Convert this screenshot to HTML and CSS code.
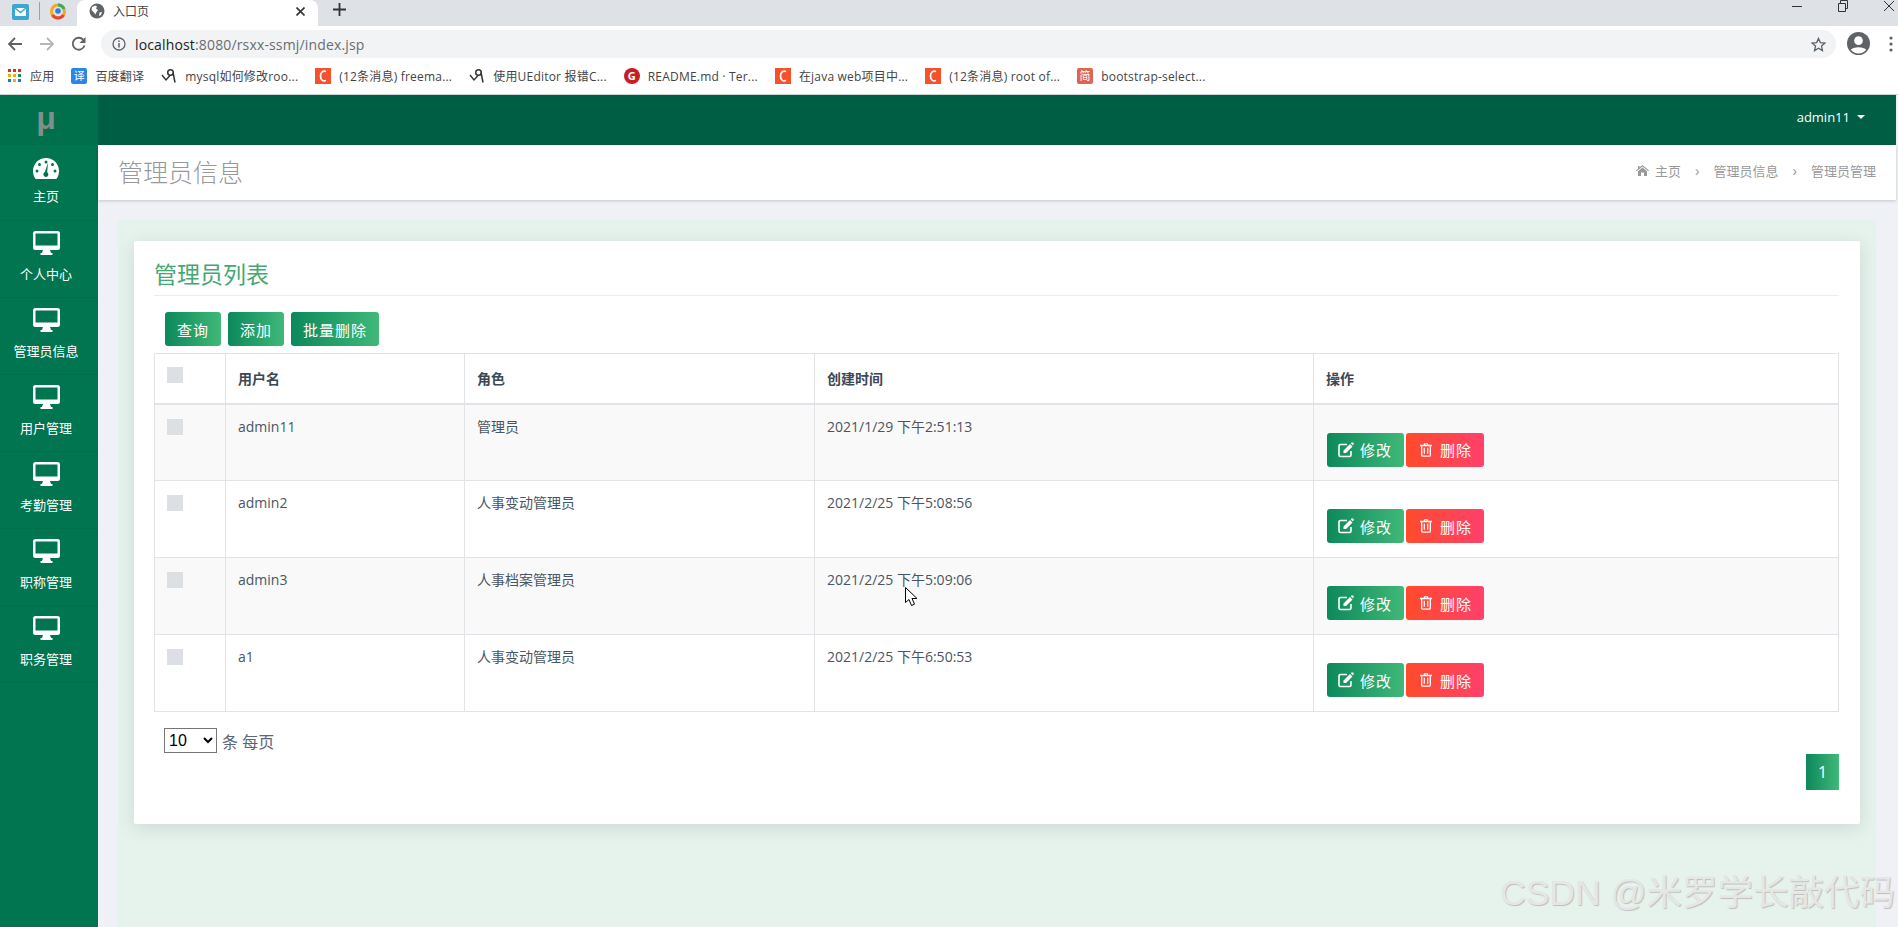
FILE: index.html
```html
<!DOCTYPE html>
<html lang="en">
<head>
    <meta charset="UTF-8">
    <title>入口页</title>
    <link rel="stylesheet" href="styles.css">
</head>
<body>
    <svg class="defs" width="0" height="0">
        <symbol id="desktop" viewBox="0 0 27 24">
            <path fill="#fff" fill-rule="evenodd" d="M2.5 0h22A2.5 2.5 0 0 1 27 2.500v14a2.500 2.500 0 0 1-2.500 2.500H17l1 3h1.500v2h-12v-2H9l1-3H2.500A2.500 2.500 0 0 1 0 16.500v-14A2.500 2.500 0 0 1 2.500 0zM2.500 2.500v12h22v-12z"/>
        </symbol>
        <symbol id="edit" viewBox="0 0 16 16">
            <path fill="none" stroke="#fff" stroke-width="1.600" d="M13 9v4a1.500 1.500 0 0 1-1.500 1.500h-9A1.500 1.500 0 0 1 1 13V4a1.500 1.500 0 0 1 1.500-1.500H9"/>
            <path fill="#fff" d="M5.500 8.500 12 2l2.500 2.500-6.500 6.500H5.500zM12.800 1.200l.7-.7a1 1 0 0 1 1.400 0l.6.6a1 1 0 0 1 0 1.400l-.7.7z"/>
        </symbol>
        <symbol id="trash" viewBox="0 0 14 16">
            <path fill="#fff" fill-rule="evenodd" d="M4.500 2V1a1 1 0 0 1 1-1h3a1 1 0 0 1 1 1v1H14v1.500h-1.200V14a2 2 0 0 1-2 2H3.200a2 2 0 0 1-2-2V3.500H0V2zM5.800 2h2.400V1.200H5.800zM2.700 3.500V14c0 .3.200.5.500.5h7.600c.3 0 .5-.2.500-.5V3.500zM4.300 5.500h1.400v7H4.300zM8.300 5.500h1.400v7H8.300z"/>
        </symbol>
        <symbol id="csdn" viewBox="0 0 16 16">
            <rect width="16" height="16" fill="#f5512d"/>
            <path fill="none" stroke="#fff" stroke-width="1.700" d="M11 3.500C8 2.300 5.500 4 5.500 8s2.500 5.700 5.500 4.500"/>
        </symbol>
        <symbol id="quill" viewBox="0 0 16 16">
            <path fill="none" stroke="#333" stroke-width="1.400" d="M1 7l4 5 4-4.500"/>
            <circle cx="9.500" cy="4.500" r="2.800" fill="none" stroke="#333" stroke-width="1.500"/>
            <path fill="none" stroke="#333" stroke-width="1.500" d="M12 4.500l2 10"/>
        </symbol>
    </svg>

    <div class="tabstrip">
        <svg class="pin-mail" width="17" height="16" viewBox="0 0 17 16"><rect width="17" height="16" rx="2" fill="#3ba7d0"/><path fill="#fff" d="M3 4h11v8H3z"/><path fill="none" stroke="#3ba7d0" stroke-width="1.500" d="M3 4l5.500 4.500L14 4"/></svg>
        <span class="pin-divider"></span>
        <svg class="pin-qq" width="16" height="17" viewBox="0 0 16 17"><circle cx="8" cy="8.500" r="6.500" fill="none" stroke="#f5a623" stroke-width="3"/><path fill="none" stroke="#e2492f" stroke-width="3" d="M2.500 12a6.500 6.500 0 0 0 11 0"/><path fill="none" stroke="#3dab5b" stroke-width="3" d="M8 2a6.500 6.500 0 0 1 6 4"/><circle cx="8" cy="8" r="2.800" fill="#2f7fd8"/></svg>
        <div class="tab">
            <svg width="16" height="16" viewBox="0 0 16 16"><circle cx="8" cy="8" r="7.500" fill="#5f6368"/><path fill="#fff" d="M3 4l3-1.500 2 1-1 2 2 1.500-1.500 2-1 2.500L4.500 9 2.500 7zM10.500 9.500l2.500-.5-1 3-2 1z"/></svg>
            <span class="tab-title">入口页</span>
            <svg class="tab-close" width="9" height="9" viewBox="0 0 9 9"><path stroke="#333" stroke-width="1.600" d="M.5.500l8 8M8.500.500l-8 8"/></svg>
        </div>
        <svg class="new-tab" width="13" height="13" viewBox="0 0 13 13"><path stroke="#333" stroke-width="1.800" d="M6.500 0v13M0 6.500h13"/></svg>
        <div class="window-controls">
            <svg width="12" height="12" viewBox="0 0 12 12"><path stroke="#333" d="M1 6.500h10"/></svg>
            <svg width="12" height="12" viewBox="0 0 12 12"><path fill="none" stroke="#333" d="M1.500 3.500h7v8h-7zM3.500 3.500v-3h7v8h-2"/></svg>
            <svg width="12" height="12" viewBox="0 0 12 12"><path stroke="#333" d="M1 1l10 10M11 1L1 11"/></svg>
        </div>
    </div>

    <div class="addressbar">
        <svg class="nav-icon" width="16" height="16" viewBox="0 0 16 16"><path fill="none" stroke="#5f6368" stroke-width="1.800" d="M15 8H2M8 2 2 8l6 6"/></svg>
        <svg class="nav-icon" width="16" height="16" viewBox="0 0 16 16"><path fill="none" stroke="#b4b7bb" stroke-width="1.800" d="M1 8h13M8 2l6 6-6 6"/></svg>
        <svg class="nav-icon" width="16" height="16" viewBox="0 0 16 16"><path fill="none" stroke="#5f6368" stroke-width="1.800" d="M13.500 9.500A6 6 0 1 1 12.200 3.700"/><path fill="#5f6368" d="M14.500 1v6h-6z"/></svg>
        <div class="omnibox">
            <svg width="14" height="14" viewBox="0 0 14 14"><circle cx="7" cy="7" r="6" fill="none" stroke="#5f6368" stroke-width="1.300"/><path stroke="#5f6368" stroke-width="1.500" d="M7 6v4.500M7 3.500v1.500"/></svg>
            <span class="url"><span class="url-host">localhost</span>:8080/rsxx-ssmj/index.jsp</span>
            <svg class="star" width="15" height="15" viewBox="0 0 16 16"><path fill="none" stroke="#5f6368" stroke-width="1.400" d="M8 1.500l2 4.500 4.800.5-3.600 3.200 1 4.800L8 12l-4.200 2.500 1-4.800L1.200 6.500 6 6z"/></svg>
        </div>
        <svg class="avatar" width="23" height="23" viewBox="0 0 24 24"><circle cx="12" cy="12" r="12" fill="#5f6368"/><circle cx="12" cy="9" r="4.500" fill="#fff"/><path fill="#fff" d="M4 18.500c2-3.500 14-3.500 16 0a10 10 0 0 1-16 0z"/></svg>
        <svg class="menu-dots" width="4" height="16" viewBox="0 0 4 16"><circle cx="2" cy="2" r="1.600" fill="#5f6368"/><circle cx="2" cy="8" r="1.600" fill="#5f6368"/><circle cx="2" cy="14" r="1.600" fill="#5f6368"/></svg>
    </div>

    <div class="bookmarks">
        <div class="bm bm-apps">
            <svg width="14" height="14" viewBox="0 0 14 14"><g fill="#d93025"><rect width="3" height="3"/><rect x="5" width="3" height="3"/><rect x="10" width="3" height="3"/></g><g fill="#f9ab00"><rect y="5" width="3" height="3"/><rect x="5" y="5" width="3" height="3"/><rect x="10" y="5" width="3" height="3" fill="#1e8e3e"/></g><g fill="#1a73e8"><rect y="10" width="3" height="3"/><rect x="5" y="10" width="3" height="3" fill="#f9ab00"/><rect x="10" y="10" width="3" height="3"/></g></svg>
            <span>应用</span>
        </div>
        <div class="bm"><span class="bm-fanyi">译</span><span>百度翻译</span></div>
        <div class="bm"><svg width="16" height="16"><use href="#quill"/></svg><span>mysql如何修改roo...</span></div>
        <div class="bm"><svg width="16" height="16"><use href="#csdn"/></svg><span>(12条消息) freema...</span></div>
        <div class="bm"><svg width="16" height="16"><use href="#quill"/></svg><span>使用UEditor 报错C...</span></div>
        <div class="bm"><span class="bm-gitee">G</span><span>README.md · Ter...</span></div>
        <div class="bm"><svg width="16" height="16"><use href="#csdn"/></svg><span>在java web项目中...</span></div>
        <div class="bm"><svg width="16" height="16"><use href="#csdn"/></svg><span>(12条消息) root of...</span></div>
        <div class="bm"><span class="bm-jian">简</span><span>bootstrap-select...</span></div>
    </div>

    <div class="app">
        <aside class="sidebar">
            <div class="logo">μ</div>
            <a class="side-item">
                <svg class="side-gauge" width="26" height="21" viewBox="0 0 26 21">
                    <path fill="#fff" d="M13 0C5.800 0 0 5.800 0 13c0 2.800.8 5.400 2.200 7.500.3.300.6.500 1 .5h19.600c.4 0 .7-.2 1-.5C25.200 18.400 26 15.800 26 13 26 5.800 20.200 0 13 0z"/>
                    <g fill="#00754f"><circle cx="13" cy="4" r="1.500"/><circle cx="6.500" cy="6.500" r="1.500"/><circle cx="19.500" cy="6.500" r="1.500"/><circle cx="4" cy="13" r="1.500"/><circle cx="22" cy="13" r="1.500"/><path d="M15 4.500l-.8 9.800a2.500 2.500 0 1 1-2.300-.2z"/></g>
                </svg>
                <span>主页</span>
            </a>
            <a class="side-item"><svg width="27" height="24"><use href="#desktop"/></svg><span>个人中心</span></a>
            <a class="side-item"><svg width="27" height="24"><use href="#desktop"/></svg><span>管理员信息</span></a>
            <a class="side-item"><svg width="27" height="24"><use href="#desktop"/></svg><span>用户管理</span></a>
            <a class="side-item"><svg width="27" height="24"><use href="#desktop"/></svg><span>考勤管理</span></a>
            <a class="side-item"><svg width="27" height="24"><use href="#desktop"/></svg><span>职称管理</span></a>
            <a class="side-item"><svg width="27" height="24"><use href="#desktop"/></svg><span>职务管理</span></a>
        </aside>

        <main class="main">
            <header class="topbar">
                <span class="user">admin11</span>
                <span class="caret"></span>
            </header>
            <div class="page-head">
                <h2 class="page-title">管理员信息</h2>
                <div class="crumbs">
                    <svg width="13" height="11" viewBox="0 0 13 11"><path fill="#999" d="M6.500 0 13 5.500l-.7.800L6.500 1.500.7 6.300 0 5.500l2-1.700V1h1.500v1.500zM6.500 2.500 11 6.200V11H8V7.500H5V11H2V6.200z"/></svg>
                    <span>主页</span>
                    <span class="crumb-sep">›</span>
                    <span>管理员信息</span>
                    <span class="crumb-sep">›</span>
                    <span>管理员管理</span>
                </div>
            </div>
            <div class="content">
                <section class="card">
                    <h3 class="card-title">管理员列表</h3>
                    <div class="toolbar">
                        <button class="btn">查询</button>
                        <button class="btn">添加</button>
                        <button class="btn">批量删除</button>
                    </div>
                    <table class="grid">
                        <thead>
                            <tr>
                                <th class="col-check"><span class="check"></span></th>
                                <th class="col-name">用户名</th>
                                <th class="col-role">角色</th>
                                <th class="col-time">创建时间</th>
                                <th>操作</th>
                            </tr>
                        </thead>
                        <tbody>
                            <tr>
                                <td><span class="check"></span></td>
                                <td>admin11</td>
                                <td>管理员</td>
                                <td>2021/1/29 下午2:51:13</td>
                                <td class="actions"><div class="action-row">
                                    <button class="btn btn-sm"><svg width="16" height="16"><use href="#edit"/></svg>修改</button>
                                    <button class="btn btn-sm btn-red"><svg width="12" height="14"><use href="#trash"/></svg>删除</button>
                                </div></td>
                            </tr>
                            <tr>
                                <td><span class="check"></span></td>
                                <td>admin2</td>
                                <td>人事变动管理员</td>
                                <td>2021/2/25 下午5:08:56</td>
                                <td class="actions"><div class="action-row">
                                    <button class="btn btn-sm"><svg width="16" height="16"><use href="#edit"/></svg>修改</button>
                                    <button class="btn btn-sm btn-red"><svg width="12" height="14"><use href="#trash"/></svg>删除</button>
                                </div></td>
                            </tr>
                            <tr>
                                <td><span class="check"></span></td>
                                <td>admin3</td>
                                <td>人事档案管理员</td>
                                <td>2021/2/25 下午5:09:06</td>
                                <td class="actions"><div class="action-row">
                                    <button class="btn btn-sm"><svg width="16" height="16"><use href="#edit"/></svg>修改</button>
                                    <button class="btn btn-sm btn-red"><svg width="12" height="14"><use href="#trash"/></svg>删除</button>
                                </div></td>
                            </tr>
                            <tr>
                                <td><span class="check"></span></td>
                                <td>a1</td>
                                <td>人事变动管理员</td>
                                <td>2021/2/25 下午6:50:53</td>
                                <td class="actions"><div class="action-row">
                                    <button class="btn btn-sm"><svg width="16" height="16"><use href="#edit"/></svg>修改</button>
                                    <button class="btn btn-sm btn-red"><svg width="12" height="14"><use href="#trash"/></svg>删除</button>
                                </div></td>
                            </tr>
                        </tbody>
                    </table>
                    <div class="page-size">
                        <select class="size-select"><option>10</option><option>20</option></select>
                        <span>条 每页</span>
                    </div>
                    <div class="pager"><span class="page-num">1</span></div>
                </section>
            </div>
        </main>
    </div>

    <svg class="cursor" width="13" height="20" viewBox="0 0 13 20"><path fill="#fff" stroke="#000" d="M.5.500v15l3.500-3 2.500 6 3-1.300-2.500-5.700h5z"/></svg>
    <div class="watermark">CSDN @米罗学长敲代码</div>
</body>
</html>
```

FILE: styles.css
```css
* {
    box-sizing: border-box;
}
html, body {
    height: 100%;
}
body {
    margin: 0;
    display: flex;
    flex-direction: column;
    overflow: hidden;
    position: relative;
    font-family: "Open Sans", "Noto Sans CJK SC", sans-serif;
    font-size: 14px;
    color: #4a5564;
    background-color: #fff;
}
.defs {
    position: absolute;
}

/* browser chrome */
.tabstrip {
    height: 26px;
    flex: none;
    display: flex;
    align-items: center;
    background-color: #dee1e6;
}
.pin-mail {
    margin-left: 12px;
    margin-top: -3px;
}
.pin-divider {
    width: 1px;
    height: 18px;
    margin: -4px 10px 0 10px;
    background-color: #9da0a5;
}
.pin-qq {
    margin-top: -3px;
}
.tab {
    width: 241px;
    height: 26px;
    margin-left: 11px;
    padding-left: 12px;
    display: flex;
    align-items: center;
    background-color: #fff;
    border-radius: 8px 8px 0 0;
    font-size: 12px;
    color: #444;
}
.tab svg {
    margin-top: -4px;
}
.tab-title {
    margin-left: 8px;
    margin-top: -4px;
}
.tab svg.tab-close {
    margin-left: auto;
    margin-right: 13px;
}
.new-tab {
    margin-left: 15px;
    margin-top: -8px;
}
.window-controls {
    margin-left: auto;
    display: flex;
    gap: 34px;
    padding-right: 3px;
    margin-top: -14px;
}
.addressbar {
    height: 32px;
    flex: none;
    display: flex;
    align-items: flex-end;
    background-color: #fff;
}
.nav-icon {
    margin-bottom: 6px;
    margin-left: 16px;
}
.nav-icon:first-child {
    margin-left: 7px;
}
.omnibox {
    width: 1735px;
    height: 28px;
    margin-left: 14px;
    padding: 0 10px 0 11px;
    display: flex;
    align-items: center;
    background-color: #f1f3f4;
    border-radius: 14px;
    font-size: 14px;
    letter-spacing: 0.15px;
    color: #6a6d71;
}
.url {
    margin-left: 9px;
}
.url-host {
    color: #222;
}
.star {
    margin-left: auto;
}
.avatar {
    margin-left: 11px;
    margin-bottom: 3px;
}
.menu-dots {
    margin-left: 19px;
    margin-bottom: 6px;
}
.bookmarks {
    height: 37px;
    flex: none;
    padding-left: 8px;
    display: flex;
    align-items: center;
    gap: 17px;
    background-color: #fff;
    border-bottom: 1px solid #c9d6d0;
    font-size: 12px;
    letter-spacing: 0.2px;
    color: #444;
}
.bm {
    display: flex;
    align-items: center;
    gap: 8px;
    white-space: nowrap;
}
.bm svg {
    flex: none;
}
.bm-fanyi, .bm-gitee, .bm-jian {
    width: 16px;
    height: 16px;
    flex: none;
    display: flex;
    align-items: center;
    justify-content: center;
    color: #fff;
    font-size: 11px;
    line-height: 16px;
}
.bm-fanyi {
    background-color: #2a87ea;
    border-radius: 2px;
}
.bm-gitee {
    background-color: #c71d23;
    border-radius: 50%;
    font-weight: 700;
}
.bm-jian {
    background-color: #dd6650;
    border-radius: 2px;
}

/* sidebar */
.app {
    flex: 1;
    display: flex;
    min-height: 0;
}
.sidebar {
    width: 98px;
    flex: none;
    background-color: #00754f;
}
.logo {
    height: 50px;
    padding: 0 6px 4px 0;
    display: flex;
    align-items: center;
    justify-content: center;
    background-color: #006f4c;
    font-family: "Liberation Sans", sans-serif;
    font-size: 32px;
    font-weight: 700;
    color: #7f8f89;
}
.side-item {
    height: 77px;
    padding: 10px 6px 0 0;
    display: flex;
    flex-direction: column;
    align-items: center;
    border-bottom: 1px solid #006f4b;
    font-size: 13px;
    line-height: 18px;
    color: #fff;
}
.side-item span {
    margin-top: 10px;
}
.side-item:first-of-type {
    height: 76px;
    padding-top: 13px;
}
.side-item:first-of-type span {
    margin-top: 8px;
}

/* main column */
.main {
    flex: 1;
    min-width: 0;
    display: flex;
    flex-direction: column;
    padding-right: 2px;
    background-color: #eff1f6;
}
.topbar {
    height: 50px;
    flex: none;
    padding: 0 31px 6px 0;
    display: flex;
    align-items: center;
    justify-content: flex-end;
    background-color: #005e44;
    color: #fff;
    font-size: 13px;
}
.caret {
    width: 0;
    height: 0;
    margin-left: 7px;
    border-left: 4px solid transparent;
    border-right: 4px solid transparent;
    border-top: 4px solid #fff;
}
.page-head {
    height: 55px;
    flex: none;
    padding: 0 20px 4px 20px;
    display: flex;
    align-items: center;
    justify-content: space-between;
    background-color: #fff;
    box-shadow: 0 1px 3px rgba(0, 0, 0, 0.18);
}
.page-title {
    margin: 0;
    font-size: 25px;
    font-weight: 300;
    color: #999;
}
.crumbs {
    display: flex;
    align-items: center;
    gap: 6px;
    font-size: 13px;
    color: #999;
}
.crumb-sep {
    margin: 0 8px;
    font-size: 15px;
    line-height: 15px;
}
.content {
    flex: 1;
    margin: 20px 20px 0 20px;
    padding: 21px 16px 0 16px;
    background-color: #e6f3ec;
}

/* card */
.card {
    height: 583px;
    padding: 0 21px 0 20px;
    background-color: #fff;
    border-radius: 2px;
    box-shadow: 0 4px 18px rgba(30, 50, 80, 0.13);
}
.card-title {
    height: 55px;
    margin: 0 0 16px 0;
    padding-top: 15px;
    border-bottom: 1px solid #eee;
    font-size: 23px;
    font-weight: 400;
    line-height: 36px;
    color: #45a874;
}
.toolbar {
    height: 34px;
    margin-bottom: 7px;
    padding-left: 11px;
    display: flex;
    gap: 7px;
}
.btn {
    height: 34px;
    padding: 0 12px;
    display: inline-flex;
    align-items: center;
    border: none;
    border-radius: 3px;
    background: linear-gradient(to right, #0c895c, #40b878);
    color: #fff;
    font-family: inherit;
    font-size: 15px;
    letter-spacing: 1px;
}
.btn-sm {
    width: 77px;
    padding: 0 0 0 11px;
    gap: 6px;
}
.btn-red {
    width: 78px;
    padding-left: 14px;
    gap: 8px;
    background: linear-gradient(to right, #ff4b2b, #ff416c);
}

/* table */
.grid {
    width: 100%;
    table-layout: fixed;
    border-collapse: collapse;
}
.grid th, .grid td {
    padding: 11px 12px;
    border: 1px solid #e1e3e7;
    text-align: left;
    vertical-align: top;
    font-size: 14px;
    line-height: 22px;
    font-weight: 400;
}
.grid th {
    height: 50px;
    padding-top: 14px;
    border-bottom-width: 2px;
    font-weight: 700;
    color: #3d4855;
}
.grid th.col-check {
    padding-top: 13px;
}
.grid td {
    height: 77px;
}
.grid tbody tr:nth-child(odd) {
    background-color: #f9f9f9;
}
.col-check {
    width: 71px;
}
.col-name {
    width: 239px;
}
.col-role {
    width: 350px;
}
.col-time {
    width: 499px;
}
.check {
    display: block;
    width: 16px;
    height: 16px;
    background-color: #dcdfe3;
}
.grid td .check {
    margin-top: 3px;
}
.grid td.actions {
    padding: 28px 0 0 13px;
}
.action-row {
    display: flex;
    gap: 2px;
}

/* pager */
.page-size {
    height: 25px;
    margin: 16px 0 0 10px;
    display: flex;
    align-items: center;
    gap: 5px;
    font-size: 16px;
    color: #5a6675;
}
.size-select {
    width: 53px;
    height: 25px;
    font-family: "Liberation Sans", sans-serif;
    font-size: 16px;
    background-color: #fff;
    color: #000;
}
.pager {
    display: flex;
    justify-content: flex-end;
    margin-top: 1px;
}
.page-num {
    width: 33px;
    height: 36px;
    display: flex;
    align-items: center;
    justify-content: center;
    background: linear-gradient(to right, #0c895c, #40b878);
    color: #fff;
    font-size: 16px;
}

/* things lying over the page */
.cursor {
    position: absolute;
    left: 905px;
    top: 587px;
}
.watermark {
    position: absolute;
    right: 3px;
    bottom: 12px;
    font-family: "Liberation Sans", "Noto Sans CJK SC", sans-serif;
    font-size: 35.500px;
    line-height: 44px;
    color: #e6e6e6;
    text-shadow: 1px 1px 1px #bdbdbd;
    white-space: nowrap;
}
```
